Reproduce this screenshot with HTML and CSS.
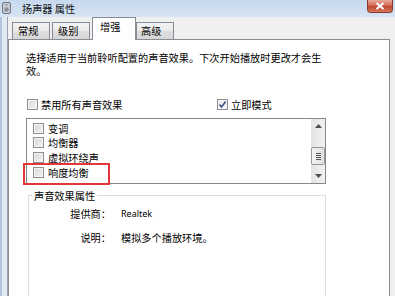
FILE: index.html
```html
<!DOCTYPE html>
<html lang="zh-CN">
<head>
    <meta charset="UTF-8">
    <meta name="viewport" content="width=device-width, initial-scale=1.0">
    <title>扬声器 属性</title>
    <link rel="stylesheet" href="styles.css">
</head>
<body>
    <div class="window">
        <div class="titlebar">
            <svg class="app-icon" width="9" height="12" viewBox="0 0 9 12">
                <rect x="0.5" y="0.5" width="8" height="11" rx="1.5" fill="#c9cdd3" stroke="#6f7680"/>
                <circle cx="4.5" cy="7.5" r="2.3" fill="#8a919b"/>
                <circle cx="4.5" cy="3" r="1" fill="#8a919b"/>
            </svg>
            <span class="title">扬声器 属性</span>
            <div class="close">
                <svg width="10" height="8" viewBox="0 0 10 8">
                    <path d="M1.5 1 L8.5 7 M8.5 1 L1.5 7" stroke="#fff" stroke-width="2"/>
                </svg>
            </div>
        </div>

        <div class="client">
            <div class="tabs">
                <div class="tab">常规</div>
                <div class="tab">级别</div>
                <div class="tab active">增强</div>
                <div class="tab last">高级</div>
            </div>

            <div class="panel">
                <p class="desc">选择适用于当前聆听配置的声音效果。下次开始播放时更改才会生效。</p>

                <div class="options">
                    <label class="check"><span class="box"></span>禁用所有声音效果</label>
                    <label class="check"><span class="box checked">
                        <svg width="9" height="9" viewBox="0 0 9 9"><path d="M1.5 4.5 L3.6 7 L7.6 1.6" fill="none" stroke="#3c4f86" stroke-width="1.6"/></svg>
                    </span>立即模式</label>
                </div>

                <div class="listbox">
                    <ul class="items">
                        <li><span class="box"></span>变调</li>
                        <li><span class="box"></span>均衡器</li>
                        <li><span class="box"></span>虚拟环绕声</li>
                        <li><span class="box"></span>响度均衡</li>
                    </ul>
                    <div class="scrollbar">
                        <div class="sb-btn">
                            <svg width="7" height="4" viewBox="0 0 7 4"><path d="M0 4 L3.5 0 L7 4 Z" fill="#4d4d4d"/></svg>
                        </div>
                        <div class="sb-track">
                            <div class="sb-thumb"><span></span><span></span><span></span><span></span></div>
                        </div>
                        <div class="sb-btn">
                            <svg width="7" height="4" viewBox="0 0 7 4"><path d="M0 0 L7 0 L3.5 4 Z" fill="#4d4d4d"/></svg>
                        </div>
                    </div>
                </div>

                <fieldset class="props">
                    <legend>声音效果属性</legend>
                    <div class="prop-grid">
                        <span class="prop-label">提供商：</span>
                        <span class="prop-value latin">Realtek</span>
                        <span class="prop-label">说明：</span>
                        <span class="prop-value">模拟多个播放环境。</span>
                    </div>
                </fieldset>

                <!-- red annotation box -->
                <div class="highlight"></div>
            </div>
        </div>
    </div>
</body>
</html>
```

FILE: styles.css
```css
body {
margin: 0;
font-family: "Noto Sans CJK SC", "Noto Sans", sans-serif;
font-size: 10.2px;
color: #000;
}

/* Whole dialog */
.window {
width: 395px;
height: 296px;
overflow: hidden;
display: flex;
flex-direction: column;
background: linear-gradient(90deg, #b3c5dc 0, #b3c5dc 2px, #e1eaf5 2px, #e1eaf5 7px, #9aa3ae 7px);
}

/* Title bar */
.titlebar {
height: 17px;
flex: none;
display: flex;
align-items: center;
background: linear-gradient(#c7d9ee, #d6e4f4);
}

.app-icon {
margin-left: 2px;
margin-top: -2px;
}

.title {
margin-left: 11px;
line-height: 13px;
color: #111;
}

.close {
align-self: flex-start;
margin-left: auto;
margin-right: 2px;
width: 26px;
height: 13px;
box-sizing: border-box;
border: 1px solid #8a3a33;
border-top: none;
border-radius: 0 0 4px 4px;
background: linear-gradient(#e8a898, #d26c5c 45%, #c2452f 55%, #d27a5f);
display: flex;
align-items: center;
justify-content: center;
}

/* Client area */
.client {
flex: 1;
margin-left: 8px;
display: flex;
flex-direction: column;
background: #f0f0f0;
}

/* Tabs */
.tabs {
height: 22px;
flex: none;
display: flex;
align-items: flex-end;
padding-left: 2px;
}

.tab {
width: 38px;
height: 17px;
box-sizing: border-box;
margin-left: 2px;
padding-left: 5px;
border: 1px solid #898c95;
border-bottom: none;
background: linear-gradient(#f4f4f4, #e9e9e9 50%, #dedede 51%, #d7d7d7);
line-height: 16px;
}

.tab.active {
width: 44px;
height: 23px;
margin-bottom: -1px;
padding-top: 2px;
padding-left: 7px;
line-height: 14px;
background: #fff;
position: relative;
z-index: 1;
}

.tab.last {
margin-left: 0;
padding-left: 4px;
}

/* Tab page */
.panel {
flex: 1;
width: 382px;
box-sizing: border-box;
border: 1px solid #898c95;
background: #fff;
padding: 11px 0 0 17px;
position: relative;
}

.desc {
margin: 0;
width: 300px;
line-height: 13px;
}

.options {
margin-top: 21px;
padding-left: 1px;
display: grid;
grid-template-columns: 190px auto;
line-height: 13px;
}

.check {
display: flex;
align-items: center;
gap: 3px;
}

.box {
width: 11px;
height: 11px;
flex: none;
box-sizing: border-box;
border: 1px solid #8e8f8f;
background: linear-gradient(135deg, #d2d5da, #f6f6f6);
box-shadow: inset 0 0 0 1px #f5f5f5;
}

.box.checked {
background: linear-gradient(135deg, #e6e9ee, #fbfbfb);
display: flex;
align-items: center;
justify-content: center;
}

/* List with check items */
.listbox {
margin-top: 7px;
width: 300px;
height: 66px;
box-sizing: border-box;
border: 1px solid #828790;
display: flex;
}

.items {
flex: 1;
margin: 0;
padding: 2px 0 0 6px;
list-style: none;
}

.items li {
height: 14.6px;
display: flex;
align-items: center;
gap: 4px;
}

.scrollbar {
width: 14px;
display: flex;
flex-direction: column;
background: linear-gradient(90deg, #e3e3e3, #f2f2f2);
}

.sb-btn {
height: 14px;
display: flex;
align-items: center;
justify-content: center;
}

.sb-track {
flex: 1;
padding-top: 14px;
}

.sb-thumb {
height: 18px;
box-sizing: border-box;
border: 1px solid #999;
border-radius: 2px;
background: linear-gradient(90deg, #f2f2f2, #e0e0e0);
display: flex;
flex-direction: column;
align-items: center;
justify-content: center;
gap: 1px;
}

.sb-thumb span {
width: 5px;
height: 1px;
background: #555;
}

/* Group box */
.props {
margin: 5px 0 0 2px;
width: 298px;
height: 140px;
box-sizing: border-box;
padding: 0;
border: 1px solid #d5dfe5;
}

.props legend {
margin-left: 3px;
padding: 0 2px;
line-height: 13px;
}

.prop-grid {
margin-top: 5px;
display: grid;
grid-template-columns: 82px 1fr;
column-gap: 10px;
row-gap: 11px;
line-height: 13px;
}

.prop-label {
text-align: right;
}

.latin {
font-family: "Noto Sans", sans-serif;
font-size: 9px;
}

/* Red annotation */
.highlight {
position: absolute;
left: 14px;
top: 123px;
width: 87px;
height: 22px;
box-sizing: border-box;
border: 2px solid #e2363a;
}
```
